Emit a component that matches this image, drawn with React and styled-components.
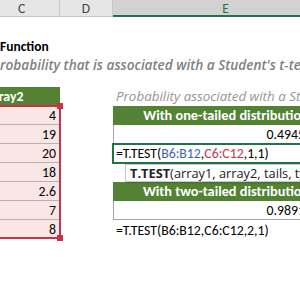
import React from 'react';
import styled, { createGlobalStyle, css } from 'styled-components';

const GlobalStyle = createGlobalStyle`
  html, body { margin: 0; padding: 0; background: #fff; }
  body { overflow: hidden; }
`;

const CELL_FONT = `Carlito, Calibri, Lato, "Liberation Sans", sans-serif`;
const UI_FONT = `"Open Sans", "Noto Sans", "Liberation Sans", sans-serif`;
const COLS = css`grid-template-columns: 76px 53px 226px;`;

const Sheet = styled.div`
  position: relative;
  width: 300px;
  height: 299px;
  overflow: hidden;
  background: #fff;
  font-family: ${CELL_FONT};
  font-size: 13.8px;
  color: #000;
`;

const HeaderRow = styled.div`
  display: grid;
  ${COLS};
  margin-left: -16px;
  height: 17px;
  box-sizing: border-box;
  background: #e6e6e6;
  border-bottom: 1px solid #c4c4c4;
`;

const ColHead = styled.div`
  display: flex;
  align-items: center;
  justify-content: center;
  border-right: 1px solid #c8c8c8;
  color: #444;
  font-size: 13.5px;
  ${p => p.$active && css`
    background: #d2d2d2;
    color: #217346;
    box-shadow: inset 0 -2px 0 #217346;
  `}
`;

const TextRow = styled.div`
  display: flex;
  align-items: flex-end;
  height: ${p => p.$h}px;
  box-sizing: border-box;
  padding-bottom: 3px;
  white-space: nowrap;
`;

const Lead = styled.span`
  display: inline-flex;
  justify-content: flex-end;
  width: 0;
  & > span { flex-shrink: 0; white-space: pre; }
`;

const Title = styled.span`
  font-weight: 700;
  font-size: 13.5px;
  color: #000;
`;

const Subtitle = styled.span`
  font-family: ${UI_FONT};
  font-style: italic;
  font-weight: 600;
  font-size: 13.6px;
  color: #7f7f7f;
`;

const Table = styled.div`
  display: grid;
  ${COLS};
  margin-left: -16px;
  grid-template-rows: repeat(10, 19px);
`;

const Cell = styled.div`
  grid-column: ${p => p.$col};
  display: flex;
  align-items: flex-end;
  box-sizing: border-box;
  padding: 0 3px 0;
  white-space: nowrap;
  min-width: 0;
`;

const GreenHead = styled(Cell)`
  background: #548235;
  color: #fff;
  font-weight: 700;
  font-size: ${p => (p.$left ? 13.8 : 14.3)}px;
  justify-content: ${p => (p.$left ? 'flex-start' : 'center')};
  padding-bottom: 1px;
`;

const NumCell = styled(Cell)`
  background: #fbe6e6;
  border-bottom: 1px solid #b4b4b4;
  justify-content: flex-end;
  padding-right: 4px;
`;

const Caption = styled(Cell)`
  font-family: ${UI_FONT};
  font-style: italic;
  color: #959595;
  font-size: 13.4px;
  padding-bottom: 1px;
`;

const ValueCell = styled(Cell)`
  border-left: 1px solid #a6a6a6;
  border-bottom: 1px solid #a6a6a6;
  justify-content: flex-end;
  padding-right: 0;
  margin-right: -1px;
  font-variant-numeric: tabular-nums;
`;

const EditCell = styled(Cell)`
  margin: -1px 0 -1px -1px;
  border: 2px solid #217346;
  padding: 0 2px 0 2px;
  align-items: center;
`;

const Ref = styled.span`
  color: ${p => (p.$tone === 'blue' ? '#3b5fc4' : '#c8334a')};
`;

const Blank = styled.div`
  grid-column: ${p => p.$col};
`;

const RangeBox = styled.div`
  position: absolute;
  left: -10px;
  top: 105px;
  width: 71px;
  height: 134px;
  box-sizing: border-box;
  border: 2px solid #c8334a;
  pointer-events: none;
`;

const Handle = styled.div`
  position: absolute;
  width: 6px;
  height: 6px;
  background: #c8334a;
  right: -4px;
  ${p => (p.$pos === 'top' ? 'top: -4px;' : 'bottom: -4px;')}
`;

const Tip = styled.div`
  position: absolute;
  left: 125px;
  top: 164px;
  height: 18px;
  box-sizing: border-box;
  padding: 0 4px;
  display: flex;
  align-items: center;
  background: #fff;
  border: 1px solid #c6c6c6;
  box-shadow: 1px 1px 2px rgba(0, 0, 0, 0.18);
  font-family: ${UI_FONT};
  font-size: 12.8px;
  color: #222;
  white-space: nowrap;
  & b { font-weight: 700; }
`;

const numbers = ['4', '19', '20', '18', '2.6', '7', '8'];

export default function App() {
  return (
    <>
      <GlobalStyle />
      <Sheet>
        <HeaderRow>
          <ColHead>C</ColHead>
          <ColHead>D</ColHead>
          <ColHead $active>E</ColHead>
        </HeaderRow>
        <TextRow $h={22} />
        <TextRow $h={19}>
          <Lead><span>T.TEST </span></Lead>
          <Title>Function</Title>
        </TextRow>
        <TextRow $h={19}>
          <Lead><Subtitle>Returns the p</Subtitle></Lead>
          <Subtitle>robability that is associated with a Student's t-test.</Subtitle>
        </TextRow>
        <TextRow $h={10} />
        <Table>
          <GreenHead $col={1} $left>array2</GreenHead>
          <Blank $col={2} />
          <Caption $col={3}>Probability associated with a Student's t-test</Caption>

          <NumCell $col={1}>{numbers[0]}</NumCell>
          <Blank $col={2} />
          <GreenHead $col={3}>With one-tailed distribution</GreenHead>

          <NumCell $col={1}>{numbers[1]}</NumCell>
          <Blank $col={2} />
          <ValueCell $col={3}>0.494511372</ValueCell>

          <NumCell $col={1}>{numbers[2]}</NumCell>
          <Blank $col={2} />
          <EditCell $col={3}>
            =T.TEST(<Ref $tone="blue">B6:B12</Ref>,<Ref $tone="red">C6:C12</Ref>,1,1)
          </EditCell>

          <NumCell $col={1}>{numbers[3]}</NumCell>
          <Blank $col={2} />
          <Blank $col={3} />

          <NumCell $col={1}>{numbers[4]}</NumCell>
          <Blank $col={2} />
          <GreenHead $col={3}>With two-tailed distribution</GreenHead>

          <NumCell $col={1}>{numbers[5]}</NumCell>
          <Blank $col={2} />
          <ValueCell $col={3}>0.989117264</ValueCell>

          <NumCell $col={1}>{numbers[6]}</NumCell>
          <Blank $col={2} />
          <Cell $col={3}>=T.TEST(B6:B12,C6:C12,2,1)</Cell>
        </Table>
        <RangeBox>
          <Handle $pos="top" />
          <Handle $pos="bottom" />
        </RangeBox>
        <Tip>
          <b>T.TEST</b>(array1, array2, tails, type)
        </Tip>
      </Sheet>
    </>
  );
}
